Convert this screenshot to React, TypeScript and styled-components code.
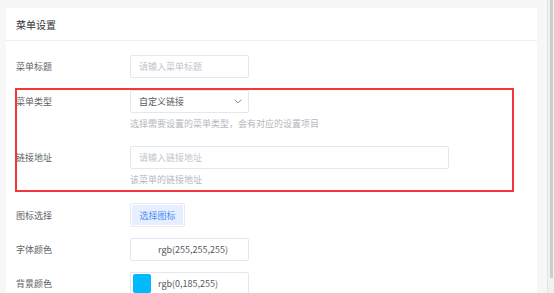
import React from "react";
import styled, { createGlobalStyle } from "styled-components";

const Global = createGlobalStyle`
  html, body { margin: 0; padding: 0; background: #f5f6f7; overflow: hidden; }
  body { font-family: "Noto Sans CJK SC", "Noto Sans", sans-serif; }
  * { box-sizing: border-box; }
`;

const Page = styled.div`
  display: flex;
  width: 554px;
  height: 293px;
  overflow: hidden;
`;

const Main = styled.div`
  flex: 1;
  padding: 8px 10px 0 6px;
  background: #f7f7f7;
`;

const ScrollTrack = styled.div`
  width: 7px;
  background: #f1f1f1;
  border-left: 1px solid #e4e4e4;
  padding: 0 1px 0 2px;
`;

const ScrollThumb = styled.div`
  height: 278px;
  background: #cdcdcd;
`;

const Card = styled.div`
  background: #fff;
  height: 300px;
`;

const CardHeader = styled.div`
  height: 33px;
  padding: 0 10px;
  display: flex;
  align-items: center;
  border-bottom: 1px solid #ebeef5;
  font-size: 10px;
  color: #303133;
`;

const Form = styled.div`
  padding: 14px 10px 0 10px;
  display: flex;
  flex-direction: column;
`;

const Group = styled.div`
  position: relative;
  display: flex;
  flex-direction: column;
  &::after {
    content: "";
    position: absolute;
    top: -2px;
    left: -1px;
    right: 13px;
    bottom: -5px;
    border: 2px solid #f3363c;
    pointer-events: none;
  }
`;

const Item = styled.div<{ $gap: number }>`
  display: flex;
  align-items: flex-start;
  margin-bottom: ${(p) => p.$gap}px;
`;

const Label = styled.div<{ $h?: number }>`
  width: 114px;
  flex: none;
  height: ${(p) => p.$h ?? 23}px;
  display: flex;
  align-items: center;
  font-size: 9px;
  color: #606266;
`;

const Control = styled.div`
  display: flex;
  flex-direction: column;
`;

const Input = styled.div<{ $w: number }>`
  width: ${(p) => p.$w}px;
  height: 23px;
  border: 1px solid #e4e7ed;
  border-radius: 2px;
  display: flex;
  align-items: center;
  padding: 0 8px;
  font-size: 9px;
  color: #c0c4cc;
`;

const Select = styled(Input)`
  justify-content: space-between;
  color: #555a62;
  padding-right: 6px;
`;

const Hint = styled.div`
  margin-top: 4px;
  height: 14px;
  line-height: 14px;
  font-size: 9px;
  color: #b4b7bd;
  white-space: nowrap;
`;

const IconButton = styled.div`
  width: 55px;
  height: 24px;
  border: 1px solid #e6e9ee;
  border-radius: 2px;
  padding: 1px;
  display: flex;
`;

const IconButtonFill = styled.div`
  flex: 1;
  background: #e6efff;
  border-radius: 1px;
  display: flex;
  align-items: center;
  justify-content: center;
  font-size: 9px;
  color: #4c8cf5;
`;

const ColorInput = styled.div`
  width: 119px;
  height: 23px;
  border: 1px solid #e4e7ed;
  border-radius: 2px;
  display: flex;
  align-items: center;
  padding: 0 2px;
  gap: 7px;
  font-size: 9px;
  color: #555a62;
`;

const Swatch = styled.div<{ $c: string }>`
  width: 18px;
  height: 19px;
  border-radius: 2px;
  background: ${(p) => p.$c};
`;

const Chevron = () => (
  <svg width="8" height="5" viewBox="0 0 8 5" fill="none">
    <path d="M0.6 0.6 L4 4 L7.4 0.6" stroke="#8c9099" strokeWidth="1" />
  </svg>
);

export default function App() {
  return (
    <>
      <Global />
      <Page>
        <Main>
          <Card>
            <CardHeader>菜单设置</CardHeader>
            <Form>
              <Item $gap={12}>
                <Label>菜单标题</Label>
                <Input $w={119}>请输入菜单标题</Input>
              </Item>
              <Group>
                <Item $gap={15}>
                  <Label>菜单类型</Label>
                  <Control>
                    <Select $w={119}>
                      <span>自定义链接</span>
                      <Chevron />
                    </Select>
                    <Hint>选择需要设置的菜单类型，会有对应的设置项目</Hint>
                  </Control>
                </Item>
                <Item $gap={0}>
                  <Label>链接地址</Label>
                  <Control>
                    <Input $w={319}>请输入链接地址</Input>
                    <Hint>该菜单的链接地址</Hint>
                  </Control>
                </Item>
              </Group>
              <Item $gap={11} style={{ marginTop: 16 }}>
                <Label $h={24}>图标选择</Label>
                <IconButton>
                  <IconButtonFill>选择图标</IconButtonFill>
                </IconButton>
              </Item>
              <Item $gap={11}>
                <Label>字体颜色</Label>
                <ColorInput>
                  <Swatch $c="#ffffff" />
                  <span>rgb(255,255,255)</span>
                </ColorInput>
              </Item>
              <Item $gap={11}>
                <Label>背景颜色</Label>
                <ColorInput>
                  <Swatch $c="rgb(0,185,255)" />
                  <span>rgb(0,185,255)</span>
                </ColorInput>
              </Item>
            </Form>
          </Card>
        </Main>
        <ScrollTrack>
          <ScrollThumb />
        </ScrollTrack>
      </Page>
    </>
  );
}
